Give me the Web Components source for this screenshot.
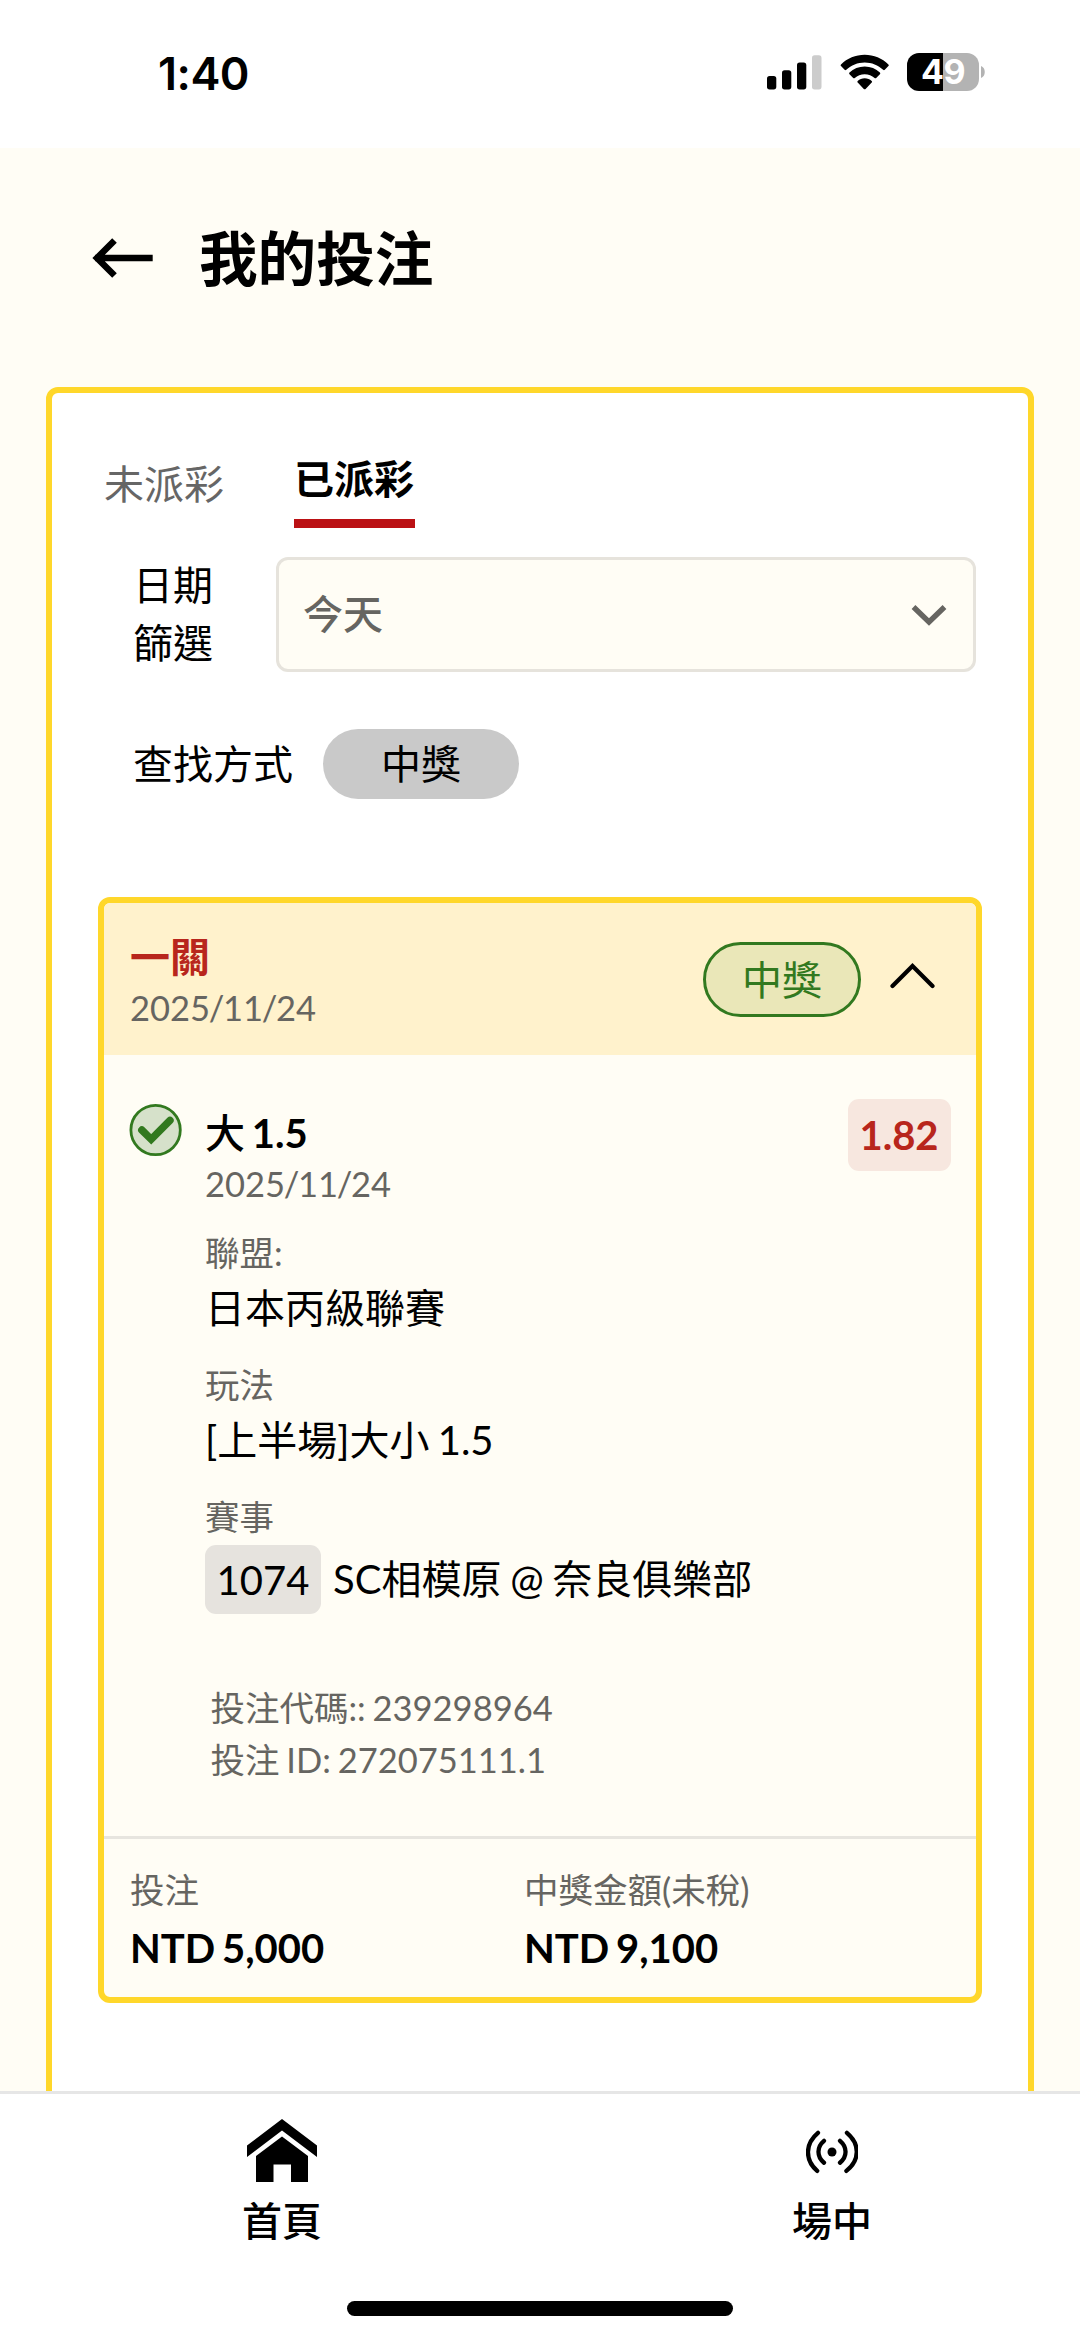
<!DOCTYPE html>
<html lang="zh-Hant">
<head>
<meta charset="utf-8">
<title>我的投注</title>
<style>
html,body{margin:0;padding:0}
body{width:1080px;height:2339px;overflow:hidden;background:#fffdf5;color:#000;font:400 40px/58px Lato,"Noto Sans CJK TC",sans-serif;
--gold:#ffd72a;--cream:#fffdf5;--muted:#666561;--line:#e6e3dc;--red:#b8261c;--green:#32791f
}
</style>
</head>
<body>
<my-bets-app></my-bets-app>
<script>
const define=(name,html)=>{
  const t=document.createElement('template');
  t.innerHTML=html;
  customElements.define(name,class extends HTMLElement{
    constructor(){super();this.attachShadow({mode:'open'}).append(t.content.cloneNode(true));}
  });
};

define('status-bar',`<style>
:host{display:flex;height:148px;background:#fff;font-family:Inter,sans-serif;box-sizing:border-box;padding:0 94px 0 158px;justify-content:space-between}
.time{font-size:45px;font-weight:600;line-height:147px;letter-spacing:-.5px}
.icons{display:flex;margin-top:53px;height:38px}
svg{display:block;flex:none}
.bat{width:72px;height:38px;border-radius:12px;background:linear-gradient(90deg,#000 36px,#b3b3b3 36px);color:#fff;font-weight:700;font-size:34px;line-height:38px;text-align:center;letter-spacing:-.5px}
</style>
<div class="time">1:40</div>
<div class="icons">
<svg width="140" height="38" viewBox="767 53 140 38"><g><rect x="767" y="76" width="9.3" height="13.4" rx="2.6"/><rect x="782" y="70.3" width="9.3" height="19.1" rx="2.6"/><rect x="797" y="62.6" width="9.3" height="26.8" rx="2.6"/><rect x="812" y="55.3" width="9.5" height="34.1" rx="2.6" fill="#ccc"/></g>
<path d="M864.7 54.7c9.1 0 17.5 3.6 23.7 9.7.5.5.5 1.200 0 1.700l-3.600 3.700c-.5.5-1.200.5-1.700 0-4.900-4.700-11.400-7.400-18.400-7.400s-13.500 2.700-18.400 7.400c-.5.5-1.200.5-1.700 0l-3.600-3.700c-.5-.5-.5-1.200 0-1.700 6.200-6.100 14.600-9.700 23.700-9.700z"/>
<path d="M864.700 66.500c5.900 0 11.200 2.300 15.200 6 .5.500.5 1.200 0 1.700l-3.700 3.700c-.5.5-1.100.5-1.600.1-2.600-2.400-6.100-3.800-9.900-3.800s-7.300 1.400-9.900 3.800c-.5.4-1.100.4-1.600-.1l-3.700-3.700c-.5-.5-.5-1.200 0-1.700 4-3.700 9.300-6 15.200-6z"/>
<path d="M864.700 78.300c2.700 0 5.100 1 7 2.600.5.500.5 1.200 0 1.700l-6.100 6.300c-.5.5-1.300.5-1.800 0l-6.100-6.300c-.5-.5-.5-1.200 0-1.700 1.900-1.600 4.300-2.600 7-2.600z"/></svg>
<div class="bat">49</div>
<svg width="7" height="38" viewBox="0 0 7 38"><path d="M2 13c5 1.500 5 10.500 0 12z" fill="#b3b3b3"/></svg>
</div>`);

define('page-header',`<style>
:host{display:flex;align-items:center;height:239px;box-sizing:border-box;padding:0 0 20px 90px;gap:44px}
svg{display:block}
h1{margin:0;font-size:58.600px;font-weight:700;line-height:84px;padding-top:1px}
</style>
<svg width="65" height="44" viewBox="0 0 65 44" fill="none" stroke="#000" stroke-width="6.500"><path d="M5 22H62.700M24.500 4.500 7 22l17.500 17.500" stroke-linejoin="miter"/></svg>
<h1><slot></slot></h1>`);

define('tab-item',`<style>
:host{display:block;height:76px;line-height:58px;padding-top:2px;box-sizing:border-box;color:#666;white-space:nowrap}
:host([active]){color:#000;font-weight:700;border-bottom:9px solid #bb1114;width:121px;height:78px;padding-top:0;margin-top:-3px}
:host([active]) slot{display:block}
</style><slot></slot>`);

define('date-select',`<style>
:host{display:flex;box-sizing:border-box;width:700px;height:115px;border:3px solid var(--line);border-radius:12px;background:var(--cream);color:var(--muted);font-weight:500;align-items:center;justify-content:space-between;padding:0 26px 1px 24px}
svg{display:block;margin-top:2px}
</style><slot></slot>
<svg width="36" height="24" viewBox="0 0 36 24" fill="none" stroke="#666561" stroke-width="5.400"><path d="M2.500 4 18 19 33.500 4"/></svg>`);

define('filter-chip',`<style>
:host{display:block;width:196px;height:70px;border-radius:35px;background:#c9c9c9;line-height:70px;text-align:center;box-sizing:border-box;padding-left:1px}
</style><slot></slot>`);

define('win-badge',`<style>
:host{display:block;box-sizing:border-box;width:158px;height:75px;border:3px solid var(--green);border-radius:38px;background:#eae7b8;color:var(--green);line-height:70px;text-align:center}
</style><slot></slot>`);

define('field-row',`<style>
:host{display:block;height:132px}
.l{font-size:34.500px;line-height:48px;height:48px;color:var(--muted)}
.v{line-height:58px;height:58px;margin-top:2px;white-space:nowrap;word-spacing:-2px}
:host([match]) .v{margin-top:4px;word-spacing:-1.500px}
</style><div class="l"><slot name="label"></slot></div><div class="v"><slot></slot></div>`);

define('match-code',`<style>
:host{display:inline-block;vertical-align:top;width:116px;height:69px;margin-right:12px;border-radius:11px;background:#e6e3de;line-height:71px;text-align:center}
</style><slot></slot>`);

define('amount-cell',`<style>
:host{display:block;flex:none;width:394px}
.l{font-size:34.500px;line-height:50px;color:var(--muted)}
.v{font-weight:700;line-height:58px;margin-top:4px;white-space:nowrap;word-spacing:-3px}
</style><div class="l"><slot name="label"></slot></div><div class="v"><slot></slot></div>`);

define('bet-card',`<style>
:host{display:block;box-sizing:border-box;width:884px;height:1106px;margin-left:46px;border:6px solid var(--gold);border-radius:12px;background:var(--cream);overflow:hidden}
header{display:flex;height:152px;background:#fff2cc;box-sizing:border-box;padding:0 40px 0 26px}
.t{flex:1;padding-top:25px}
.t b{display:block;color:var(--red);font-weight:700;line-height:58px}
.date{font-size:34.500px;line-height:48px;color:var(--muted)}
.date i{font-style:normal;margin:0 -1.300px}
.t .date{margin-top:-2px}
win-badge{margin-top:39px}
header svg{display:block;margin:60px 0 0 29px}
.body{display:flex;height:781px;box-sizing:border-box;padding:0 25.500px 0 25px}
.ok{display:block;margin-top:48px}
.c{flex:1;padding:49px 0 0 22px}
.c .sel{font-weight:700;line-height:58px;word-spacing:-3px}
.c .sel span{font-weight:500}
.c .date{margin-top:-2px}
.fields{margin-top:21px}
.fields field-row:last-child{height:189px}
.ids{font-size:34.500px;line-height:52px;color:var(--muted);padding-left:5.500px;word-spacing:-2px}
.odds{width:103px;height:72px;margin-top:43.500px;margin-left:-200px;border-radius:11px;background:#f7e7df;color:var(--red);font-weight:700;line-height:73px;text-align:center}
footer{display:flex;border-top:3px solid #e7e5df;padding:26px 0 0 26px}
</style>
<header><div class="t"><b>一關</b><div class="date">2025<i>/</i>11<i>/</i>24</div></div><win-badge>中獎</win-badge>
<svg width="46" height="26" viewBox="0 0 46 26" fill="none" stroke="#000" stroke-width="4.200" stroke-linecap="round"><path d="M2.500 23 22.500 3 42.500 23"/></svg></header>
<div class="body">
<svg class="ok" width="54" height="54" viewBox="0 0 54 54"><circle cx="26.600" cy="27" r="24.700" fill="#d6e1ca" stroke="#32791f" stroke-width="2.800"/><path d="M12.800 27 22.200 36.300 41 17.300" fill="none" stroke="#32791f" stroke-width="7.400" stroke-linecap="round"/></svg>
<div class="c"><div class="sel"><span>大</span> 1.5</div><div class="date">2025<i>/</i>11<i>/</i>24</div>
<div class="fields">
<field-row><span slot="label">聯盟:</span>日本丙級聯賽</field-row>
<field-row><span slot="label">玩法</span>[上半場]大小 1.5</field-row>
<field-row match><span slot="label">賽事</span><match-code>1074</match-code><span style="line-height:69px">SC相模原 @ 奈良俱樂部</span></field-row>
</div>
<div class="ids">投注代碼:: 239298964<br>投注 ID: 272075111.1</div></div>
<div class="odds">1.82</div>
</div>
<footer><amount-cell><span slot="label">投注</span>NTD 5,000</amount-cell><amount-cell><span slot="label">中獎金額(未稅)</span>NTD 9,100</amount-cell></footer>`);

define('bets-panel',`<style>
:host{display:block;box-sizing:border-box;width:988px;height:1760px;margin-left:46px;border:6px solid var(--gold);border-radius:12px;background:#fff}
nav{display:flex;gap:70px;padding:60px 0 0 52px;height:76px}
tab-item:first-child{width:120px}
.date{display:flex;margin-top:28px;height:115px}
.date p{margin:-1px 0 0;width:143px;padding-left:81px;line-height:58px}
.way{display:flex;margin-top:57px;height:70px;padding-left:81px;line-height:70px}
.way span{width:189.500px}
bet-card{margin-top:98px}
</style>
<nav><tab-item>未派彩</tab-item><tab-item active>已派彩</tab-item></nav>
<div class="date"><p>日期<br>篩選</p><date-select>今天</date-select></div>
<div class="way"><span>查找方式</span><filter-chip>中獎</filter-chip></div>
<bet-card></bet-card>`);

define('nav-item',`<style>
:host{display:flex;flex:none;flex-direction:column;align-items:center;width:550px;font-weight:500;line-height:58px}
::slotted(svg){display:block;margin-bottom:8px}
</style><slot name="icon"></slot><span><slot></slot></span>`);

define('bottom-nav',`<style>
:host{display:flex;flex-direction:column;align-items:center;height:248px;box-sizing:border-box;border-top:3px solid #e6e6e6;background:#fff;overflow:hidden}
.items{display:flex;align-self:stretch;padding:20px 0 0 7px;height:187px}
.bar{width:386px;height:15px;border-radius:8px;background:#000}
</style>
<div class="items">
<nav-item><svg slot="icon" width="70" height="70" viewBox="247 2114 70 70"><path d="M282 2119l35 26.500v11.500L282 2130.500 247 2157v-11.500z"/><path d="M282 2136.500l26 19.500v26H291v-17.500H273.500V2182H256v-26z"/></svg>首頁</nav-item>
<nav-item><svg slot="icon" width="52" height="70" viewBox="806.300 2114 52 70" fill="none" stroke="#000" stroke-width="4.300" stroke-linecap="round"><circle cx="832.300" cy="2152" r="4.500" fill="#000" stroke="none"/><path d="M824.300 2140.800c-7.400 6.200-7.400 16 0 21.900M840.300 2140.800c7.400 6.200 7.400 16 0 21.900M818.300 2132.800c-13.200 11-13.200 27.500-.800 38.100M847.200 2132.800c13.200 11 13.200 27.500-.5 38.100"/></svg>場中</nav-item>
</div><div class="bar"></div>`);

define('my-bets-app',`<style>
:host{display:flex;flex-direction:column;height:2339px}
main{height:1704px;overflow:hidden}
</style>
<status-bar></status-bar><page-header>我的投注</page-header><main><bets-panel></bets-panel></main><bottom-nav></bottom-nav>`);
</script>
</body>
</html>
